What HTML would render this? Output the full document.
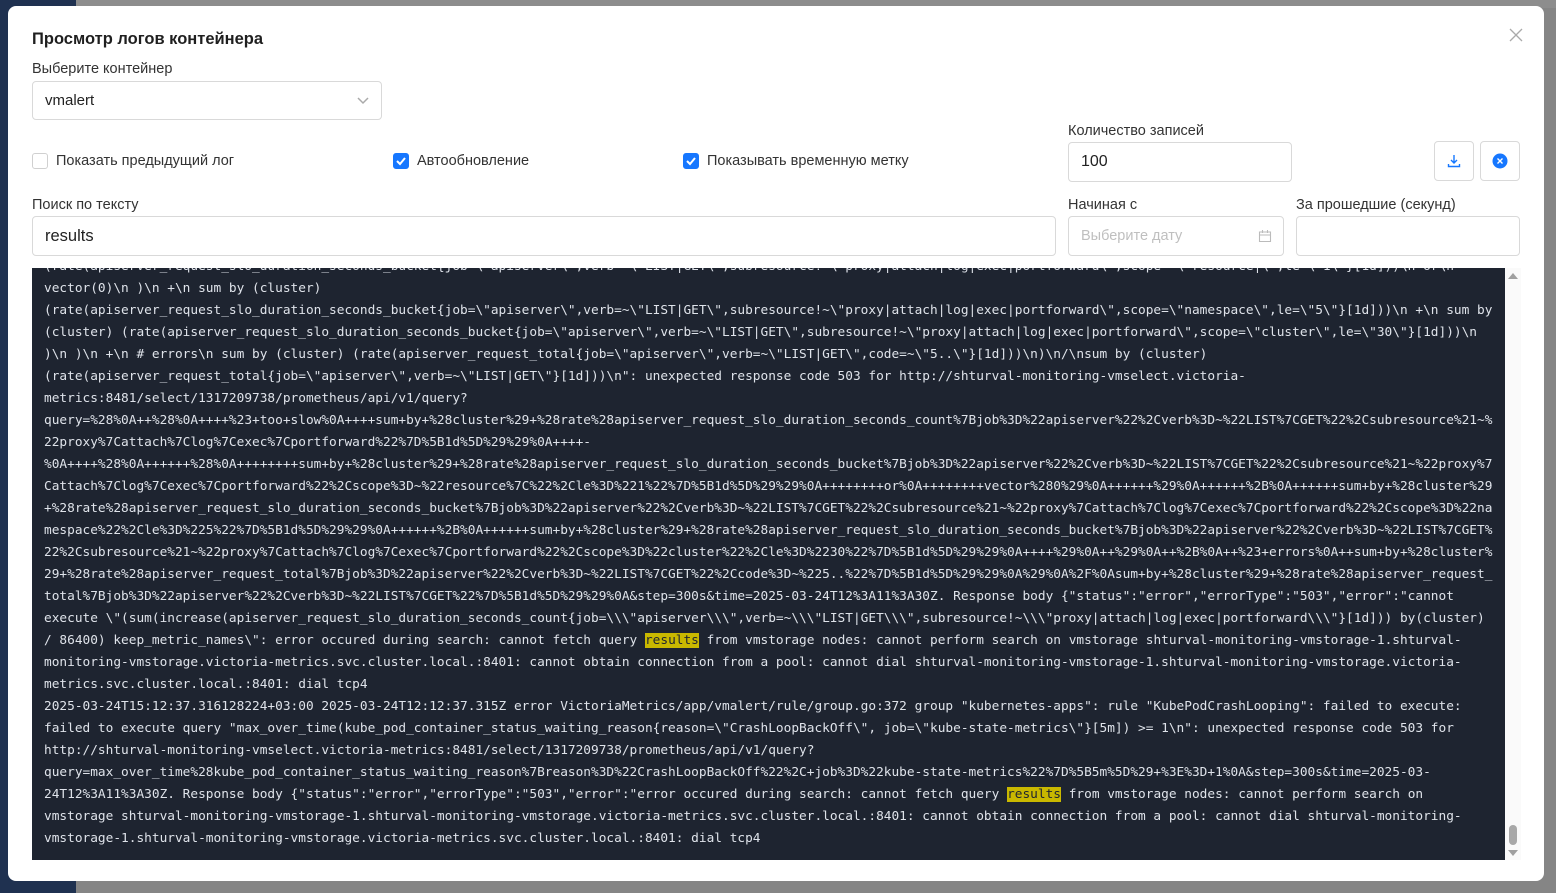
<!DOCTYPE html>
<html><head><meta charset="utf-8"><style>
*{box-sizing:border-box;margin:0;padding:0}
body{width:1556px;height:893px;overflow:hidden;background:#858585;font-family:"Liberation Sans","DejaVu Sans",sans-serif;position:relative}
.strip{position:absolute;left:0;top:0;width:76px;height:893px;background:#1f3150}
.top{position:absolute;left:76px;top:0;right:0;height:8px;background:#8d8d8d}
.modal{position:absolute;left:8px;top:6px;width:1536px;height:875px;background:#fff;border-radius:8px}
.a{position:absolute}
.t{font-size:16.5px;font-weight:600;color:#1f1f1f}
.l{font-size:14.5px;color:#333}
.in{position:absolute;border:1px solid #d9d9d9;border-radius:4px;background:#fff;font-size:15px;color:#222;padding-left:12px;display:flex;align-items:center}
.cb{position:absolute;width:16px;height:16px;border:1px solid #d0d0d0;border-radius:3px;background:#fff}
.cb.on{background:#1677ff;border-color:#1677ff}
.log{position:absolute;left:24px;top:262px;width:1473px;height:592px;background:#1e2430;overflow:hidden}
.log pre{position:absolute;left:12px;top:-12px;font-family:"DejaVu Sans Mono","Liberation Mono",monospace;font-size:12.8px;line-height:22px;color:#dfe3ea;white-space:pre}
.hl{background:#c9b800;color:#1e2430}
.sb{position:absolute;left:1497px;top:262px;width:16px;height:592px;background:#fafafa}
</style></head><body>
<div class="strip"></div><div class="top"></div>
<div class="modal">
<div class="a t" style="left:24px;top:24px">Просмотр логов контейнера</div>
<svg class="a" style="left:1500px;top:21px" width="16" height="16" viewBox="0 0 16 16"><path d="M2 2L14 14M14 2L2 14" stroke="#aaa" stroke-width="1.3"/></svg>
<div class="a l" style="left:24px;top:55px">Выберите контейнер</div>
<div class="in" style="left:24px;top:75px;width:350px;height:39px">vmalert
<svg class="a" style="left:324px;top:14px" width="12" height="10" viewBox="0 0 12 10"><path d="M1 2L6 7L11 2" stroke="#aaa" stroke-width="1.5" fill="none"/></svg></div>
<div class="cb" style="left:24px;top:147px"></div>
<div class="a l" style="left:48px;top:147px">Показать предыдущий лог</div>
<div class="cb on" style="left:385px;top:147px"><svg width="14" height="14" viewBox="0 0 14 14"><path d="M3 7L6 10L11 4" stroke="#fff" stroke-width="2" fill="none"/></svg></div>
<div class="a l" style="left:409px;top:147px">Автообновление</div>
<div class="cb on" style="left:675px;top:147px"><svg width="14" height="14" viewBox="0 0 14 14"><path d="M3 7L6 10L11 4" stroke="#fff" stroke-width="2" fill="none"/></svg></div>
<div class="a l" style="left:699px;top:147px">Показывать временную метку</div>
<div class="a l" style="left:1060px;top:117px">Количество записей</div>
<div class="in" style="left:1060px;top:136px;width:224px;height:40px;font-size:16px">100</div>
<div class="in" style="left:1426px;top:135px;width:40px;height:40px;padding:0;justify-content:center"><svg width="14" height="14" viewBox="0 0 14 14"><path d="M7 1V9M4 6L7 9L10 6M1.5 10V12.5H12.5V10" stroke="#1677ff" stroke-width="1.4" fill="none"/></svg></div>
<div class="in" style="left:1472px;top:135px;width:40px;height:40px;padding:0;justify-content:center"><svg width="16" height="16" viewBox="0 0 16 16"><circle cx="8" cy="8" r="7.5" fill="#1677ff"/><path d="M5.5 5.5L10.5 10.5M10.5 5.5L5.5 10.5" stroke="#fff" stroke-width="1.4"/></svg></div>
<div class="a l" style="left:24px;top:191px">Поиск по тексту</div>
<div class="in" style="left:24px;top:210px;width:1024px;height:40px;font-size:16.5px">results</div>
<div class="a l" style="left:1060px;top:191px">Начиная с</div>
<div class="in" style="left:1060px;top:210px;width:216px;height:40px;font-size:14.5px;color:#bfbfbf">Выберите дату
<svg class="a" style="left:189px;top:12px" width="14" height="14" viewBox="0 0 14 14"><path d="M1.5 3H12.5V12.5H1.5ZM1.5 6H12.5M4.5 1V4M9.5 1V4" stroke="#bbb" stroke-width="1.1" fill="none"/></svg></div>
<div class="a l" style="left:1288px;top:191px">За прошедшие (секунд)</div>
<div class="in" style="left:1288px;top:210px;width:224px;height:40px"></div>
<div class="log"><pre>(rate(apiserver_request_slo_duration_seconds_bucket{job=\"apiserver\",verb=~\"LIST|GET\",subresource!~\"proxy|attach|log|exec|portforward\",scope=~\"resource|\",le=\"1\"}[1d]))\n or\n
vector(0)\n )\n +\n sum by (cluster)
(rate(apiserver_request_slo_duration_seconds_bucket{job=\"apiserver\",verb=~\"LIST|GET\",subresource!~\"proxy|attach|log|exec|portforward\",scope=\"namespace\",le=\"5\"}[1d]))\n +\n sum by
(cluster) (rate(apiserver_request_slo_duration_seconds_bucket{job=\"apiserver\",verb=~\"LIST|GET\",subresource!~\"proxy|attach|log|exec|portforward\",scope=\"cluster\",le=\"30\"}[1d]))\n
)\n )\n +\n # errors\n sum by (cluster) (rate(apiserver_request_total{job=\"apiserver\",verb=~\"LIST|GET\",code=~\"5..\"}[1d]))\n)\n/\nsum by (cluster)
(rate(apiserver_request_total{job=\"apiserver\",verb=~\"LIST|GET\"}[1d]))\n": unexpected response code 503 for http://shturval-monitoring-vmselect.victoria-
metrics:8481/select/1317209738/prometheus/api/v1/query?
query=%28%0A++%28%0A++++%23+too+slow%0A++++sum+by+%28cluster%29+%28rate%28apiserver_request_slo_duration_seconds_count%7Bjob%3D%22apiserver%22%2Cverb%3D~%22LIST%7CGET%22%2Csubresource%21~%
22proxy%7Cattach%7Clog%7Cexec%7Cportforward%22%7D%5B1d%5D%29%29%0A++++-
%0A++++%28%0A++++++%28%0A++++++++sum+by+%28cluster%29+%28rate%28apiserver_request_slo_duration_seconds_bucket%7Bjob%3D%22apiserver%22%2Cverb%3D~%22LIST%7CGET%22%2Csubresource%21~%22proxy%7
Cattach%7Clog%7Cexec%7Cportforward%22%2Cscope%3D~%22resource%7C%22%2Cle%3D%221%22%7D%5B1d%5D%29%29%0A++++++++or%0A++++++++vector%280%29%0A++++++%29%0A++++++%2B%0A++++++sum+by+%28cluster%29
+%28rate%28apiserver_request_slo_duration_seconds_bucket%7Bjob%3D%22apiserver%22%2Cverb%3D~%22LIST%7CGET%22%2Csubresource%21~%22proxy%7Cattach%7Clog%7Cexec%7Cportforward%22%2Cscope%3D%22na
mespace%22%2Cle%3D%225%22%7D%5B1d%5D%29%29%0A++++++%2B%0A++++++sum+by+%28cluster%29+%28rate%28apiserver_request_slo_duration_seconds_bucket%7Bjob%3D%22apiserver%22%2Cverb%3D~%22LIST%7CGET%
22%2Csubresource%21~%22proxy%7Cattach%7Clog%7Cexec%7Cportforward%22%2Cscope%3D%22cluster%22%2Cle%3D%2230%22%7D%5B1d%5D%29%29%0A++++%29%0A++%29%0A++%2B%0A++%23+errors%0A++sum+by+%28cluster%
29+%28rate%28apiserver_request_total%7Bjob%3D%22apiserver%22%2Cverb%3D~%22LIST%7CGET%22%2Ccode%3D~%225..%22%7D%5B1d%5D%29%29%0A%29%0A%2F%0Asum+by+%28cluster%29+%28rate%28apiserver_request_
total%7Bjob%3D%22apiserver%22%2Cverb%3D~%22LIST%7CGET%22%7D%5B1d%5D%29%29%0A&amp;step=300s&amp;time=2025-03-24T12%3A11%3A30Z. Response body {"status":"error","errorType":"503","error":"cannot
execute \"(sum(increase(apiserver_request_slo_duration_seconds_count{job=\\\"apiserver\\\",verb=~\\\"LIST|GET\\\",subresource!~\\\"proxy|attach|log|exec|portforward\\\"}[1d])) by(cluster)
/ 86400) keep_metric_names\": error occured during search: cannot fetch query <span class="hl">results</span> from vmstorage nodes: cannot perform search on vmstorage shturval-monitoring-vmstorage-1.shturval-
monitoring-vmstorage.victoria-metrics.svc.cluster.local.:8401: cannot obtain connection from a pool: cannot dial shturval-monitoring-vmstorage-1.shturval-monitoring-vmstorage.victoria-
metrics.svc.cluster.local.:8401: dial tcp4
2025-03-24T15:12:37.316128224+03:00 2025-03-24T12:12:37.315Z error VictoriaMetrics/app/vmalert/rule/group.go:372 group "kubernetes-apps": rule "KubePodCrashLooping": failed to execute:
failed to execute query "max_over_time(kube_pod_container_status_waiting_reason{reason=\"CrashLoopBackOff\", job=\"kube-state-metrics\"}[5m]) &gt;= 1\n": unexpected response code 503 for
http://shturval-monitoring-vmselect.victoria-metrics:8481/select/1317209738/prometheus/api/v1/query?
query=max_over_time%28kube_pod_container_status_waiting_reason%7Breason%3D%22CrashLoopBackOff%22%2C+job%3D%22kube-state-metrics%22%7D%5B5m%5D%29+%3E%3D+1%0A&amp;step=300s&amp;time=2025-03-
24T12%3A11%3A30Z. Response body {"status":"error","errorType":"503","error":"error occured during search: cannot fetch query <span class="hl">results</span> from vmstorage nodes: cannot perform search on
vmstorage shturval-monitoring-vmstorage-1.shturval-monitoring-vmstorage.victoria-metrics.svc.cluster.local.:8401: cannot obtain connection from a pool: cannot dial shturval-monitoring-
vmstorage-1.shturval-monitoring-vmstorage.victoria-metrics.svc.cluster.local.:8401: dial tcp4</pre></div>
<div class="sb">
<svg class="a" style="left:3px;top:5px" width="10" height="6"><path d="M0 6L5 0L10 6Z" fill="#a0a0a0"/></svg>
<div class="a" style="left:4px;top:557px;width:8px;height:20px;border-radius:4px;background:#a8a8a8"></div>
<svg class="a" style="left:3px;top:582px" width="10" height="6"><path d="M0 0L5 6L10 0Z" fill="#a0a0a0"/></svg>
</div>
</div>
</body></html>
